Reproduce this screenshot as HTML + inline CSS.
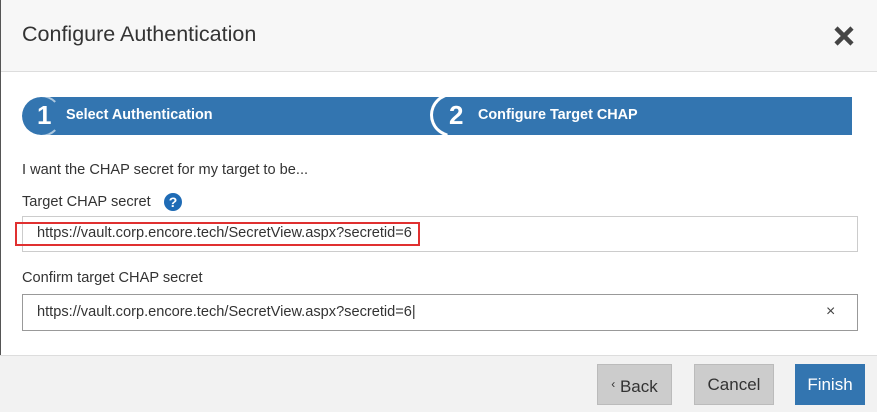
<!DOCTYPE html><html><head><style>
body{margin:0;width:877px;height:411px;overflow:hidden;background:#fff;font-family:"Liberation Sans",sans-serif;position:relative}
.a{position:absolute}
</style></head><body>
<div class="a" style="left:0;top:0;width:877px;height:71px;background:#f7f7f7;border-bottom:1px solid #ddd"></div>
<div class="a" style="left:0;top:0;width:1px;height:411px;background:#555"></div>
<div class="a" style="left:22px;top:22px;font-size:21.5px;color:#333">Configure Authentication</div>
<svg class="a" style="left:833px;top:25px" width="22" height="22"><path d="M3 3L19 19M19 3L3 19" stroke="#444" stroke-width="4.5"/></svg>
<div class="a" style="left:22px;top:97px;width:830px;height:38px;background:#3375b0;border-radius:19px 0 0 19px"></div>
<div class="a" style="left:20px;top:95px;width:38px;height:38px;border-radius:50%;border:2px solid #fff;border-right-color:transparent;opacity:.6"></div>
<div class="a" style="left:37px;top:100px;font-size:26px;font-weight:bold;color:#fff">1</div>
<div class="a" style="left:66px;top:107px;font-size:14.4px;font-weight:bold;color:#fff">Select Authentication</div>
<div class="a" style="left:430px;top:93px;width:44px;height:44px;border-radius:50%;border:3px solid #fff;border-right-color:transparent;box-sizing:border-box;clip-path:inset(0 60% 0 0)"></div>
<div class="a" style="left:449px;top:100px;font-size:26px;font-weight:bold;color:#fff">2</div>
<div class="a" style="left:478px;top:107px;font-size:14.4px;font-weight:bold;color:#fff">Configure Target CHAP</div>
<div class="a" style="left:22px;top:162px;font-size:14.6px;color:#333">I want the CHAP secret for my target to be...</div>
<div class="a" style="left:22px;top:194px;font-size:14.6px;color:#333">Target CHAP secret</div>
<div class="a" style="left:164px;top:193px;width:18px;height:18px;border-radius:50%;background:#1f6bb5;color:#fff;font-size:14px;font-weight:bold;text-align:center;line-height:18px">?</div>
<div class="a" style="left:22px;top:216px;width:834px;height:34px;border:1px solid #ccc"></div>
<div class="a" style="left:15px;top:222px;width:401px;height:20px;border:2px solid #e03030"></div>
<div class="a" style="left:37px;top:225px;font-size:14.6px;color:#333">https://vault.corp.encore.tech/SecretView.aspx?secretid=6</div>
<div class="a" style="left:22px;top:270px;font-size:14.6px;color:#333">Confirm target CHAP secret</div>
<div class="a" style="left:22px;top:294px;width:834px;height:35px;border:1px solid #999"></div>
<div class="a" style="left:37px;top:304px;font-size:14.6px;color:#333">https://vault.corp.encore.tech/SecretView.aspx?secretid=6|</div>
<div class="a" style="left:826px;top:303px;font-size:16px;color:#444">×</div>
<div class="a" style="left:0;top:355px;width:877px;height:56px;background:#f2f2f2;border-top:1px solid #ddd"></div>
<div class="a" style="left:597px;top:364px;width:75px;height:41px;background:#ccc;border:1px solid #bbb;box-sizing:border-box;font-size:17px;color:#333;text-align:center;line-height:39px"><span style="font-size:12px;vertical-align:4px">‹</span> Back</div>
<div class="a" style="left:694px;top:364px;width:80px;height:41px;background:#ccc;border:1px solid #bbb;box-sizing:border-box;font-size:17px;color:#333;text-align:center;line-height:39px">Cancel</div>
<div class="a" style="left:795px;top:364px;width:70px;height:41px;background:#3375b0;font-size:17px;color:#fff;text-align:center;line-height:41px">Finish</div>
</body></html>
